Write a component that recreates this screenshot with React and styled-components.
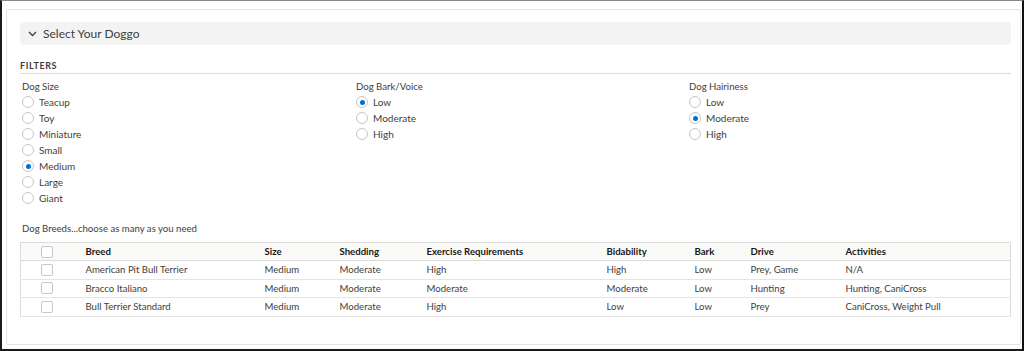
import styled, { createGlobalStyle } from "styled-components"

const GlobalStyle = createGlobalStyle`
  html, body {
    margin: 0;
    padding: 0;
    background: #ffffff;
  }
  body {
    font-family: "Segoe UI", Lato, "Liberation Sans", sans-serif;
    color: #3e3e3c;
  }
`

const sizes = ["Teacup", "Toy", "Miniature", "Small", "Medium", "Large", "Giant"]
const levels = ["Low", "Moderate", "High"]

const filterGroups = [
  { title: "Dog Size", options: sizes, selected: "Medium" },
  { title: "Dog Bark/Voice", options: levels, selected: "Low" },
  { title: "Dog Hairiness", options: levels, selected: "Moderate" },
]

const columns = [
  { label: "", width: 57 },
  { label: "Breed", width: 179 },
  { label: "Size", width: 75 },
  { label: "Shedding", width: 87 },
  { label: "Exercise Requirements", width: 180 },
  { label: "Bidability", width: 88 },
  { label: "Bark", width: 56 },
  { label: "Drive", width: 95 },
  { label: "Activities", width: 173 },
]

const breeds = [
  ["American Pit Bull Terrier", "Medium", "Moderate", "High", "High", "Low", "Prey, Game", "N/A"],
  ["Bracco Italiano", "Medium", "Moderate", "Moderate", "Moderate", "Low", "Hunting", "Hunting, CaniCross"],
  ["Bull Terrier Standard", "Medium", "Moderate", "High", "Low", "Low", "Prey", "CaniCross, Weight Pull"],
]

export default function App() {
  return (
    <>
      <GlobalStyle />
      <Frame>
        <Card>
          <SectionHeader>
            <svg width="9" height="6" viewBox="0 0 9 6">
              <path d="M1 1l3.5 3.5L8 1" fill="none" stroke="#3e3e3c" strokeWidth="1.3" />
            </svg>
            <span>Select Your Doggo</span>
          </SectionHeader>

          <FiltersTitle>FILTERS</FiltersTitle>

          <FilterGrid>
            {filterGroups.map(group => (
              <FilterGroup key={group.title}>
                <GroupLabel>{group.title}</GroupLabel>
                {group.options.map(option => (
                  <RadioRow key={option}>
                    <RadioCircle checked={option === group.selected} />
                    <span>{option}</span>
                  </RadioRow>
                ))}
              </FilterGroup>
            ))}
          </FilterGrid>

          <BreedsLabel>Dog Breeds...choose as many as you need</BreedsLabel>

          <Table>
            <colgroup>
              {columns.map((col, i) => (
                <col key={i} style={{ width: col.width }} />
              ))}
            </colgroup>
            <thead>
              <HeadRow>
                {columns.map((col, i) => (
                  <Th key={i}>{i === 0 ? <Checkbox /> : col.label}</Th>
                ))}
              </HeadRow>
            </thead>
            <tbody>
              {breeds.map(row => (
                <BodyRow key={row[0]}>
                  <Td><Checkbox /></Td>
                  {row.map((cell, i) => (
                    <Td key={i}>{cell}</Td>
                  ))}
                </BodyRow>
              ))}
            </tbody>
          </Table>
        </Card>
      </Frame>
    </>
  )
}

const Frame = styled.div`
  width: 1024px;
  height: 351px;
  box-sizing: border-box;
  border-top: 1px solid #8a8a8a;
  border-left: 2px solid #1b1b1b;
  border-right: 2px solid #111;
  border-bottom: 2px solid #1b1b1b;
  padding: 8px 1px 4px 4px;
  display: flex;
  flex-direction: column;
`

const Card = styled.div`
  flex: 1;
  border: 1px solid #e4e4e4;
  border-radius: 2px;
  padding: 12px 9px 0 13px;
  display: flex;
  flex-direction: column;
`

const SectionHeader = styled.div`
  height: 23px;
  background: #f3f3f3;
  border-radius: 4px;
  display: flex;
  align-items: center;
  gap: 6px;
  padding-left: 8px;
  font-size: 12px;
  color: #3e3e3c;
`

const FiltersTitle = styled.div`
  margin-top: 15px;
  font-size: 9px;
  font-weight: 700;
  letter-spacing: 0.6px;
  line-height: 12px;
  color: #3e3e3c;
  border-bottom: 1px solid #dddbda;
  padding-bottom: 1px;
`

const FilterGrid = styled.div`
  display: grid;
  grid-template-columns: 334px 333px 1fr;
  padding-left: 2px;
  margin-top: 6px;
`

const FilterGroup = styled.div`
  display: flex;
  flex-direction: column;
`

const GroupLabel = styled.div`
  font-size: 9.6px;
  line-height: 14px;
  color: #3e3e3c;
`

const RadioRow = styled.div`
  display: flex;
  align-items: center;
  gap: 5px;
  height: 16px;
  font-size: 10px;
  color: #3e3e3c;
`

const RadioCircle = styled.span`
  width: 12px;
  height: 12px;
  box-sizing: border-box;
  border: 1px solid #c9c7c5;
  border-radius: 50%;
  background: #fff;
  display: flex;
  align-items: center;
  justify-content: center;
  &::after {
    content: "";
    width: 5px;
    height: 5px;
    border-radius: 50%;
    background: ${p => (p.checked ? "#0070d2" : "transparent")};
  }
`

const BreedsLabel = styled.div`
  margin-top: 16px;
  padding-left: 2px;
  font-size: 9.6px;
  line-height: 14px;
  color: #3e3e3c;
`

const Table = styled.table`
  margin-top: 6px;
  width: 990px;
  table-layout: fixed;
  border-collapse: collapse;
  border: 1px solid #dddbda;
  font-size: 9.6px;
  color: #3e3e3c;
`

const HeadRow = styled.tr`
  height: 18px;
`

const BodyRow = styled.tr`
  height: 18.5px;
`

const Th = styled.th`
  text-align: left;
  font-weight: 700;
  color: #181818;
  background: #fafaf9;
  padding: 0 0 0 8px;
  border-bottom: 1px solid #dddbda;
  &:first-child {
    padding-left: 20px;
  }
`

const Td = styled.td`
  padding: 0 0 0 8px;
  border-bottom: 1px solid #e5e5e5;
  white-space: nowrap;
  &:first-child {
    padding-left: 20px;
  }
`

const Checkbox = styled.span`
  display: block;
  width: 12px;
  height: 12px;
  box-sizing: border-box;
  border: 1px solid #c9c7c5;
  border-radius: 2px;
  background: #fff;
`
